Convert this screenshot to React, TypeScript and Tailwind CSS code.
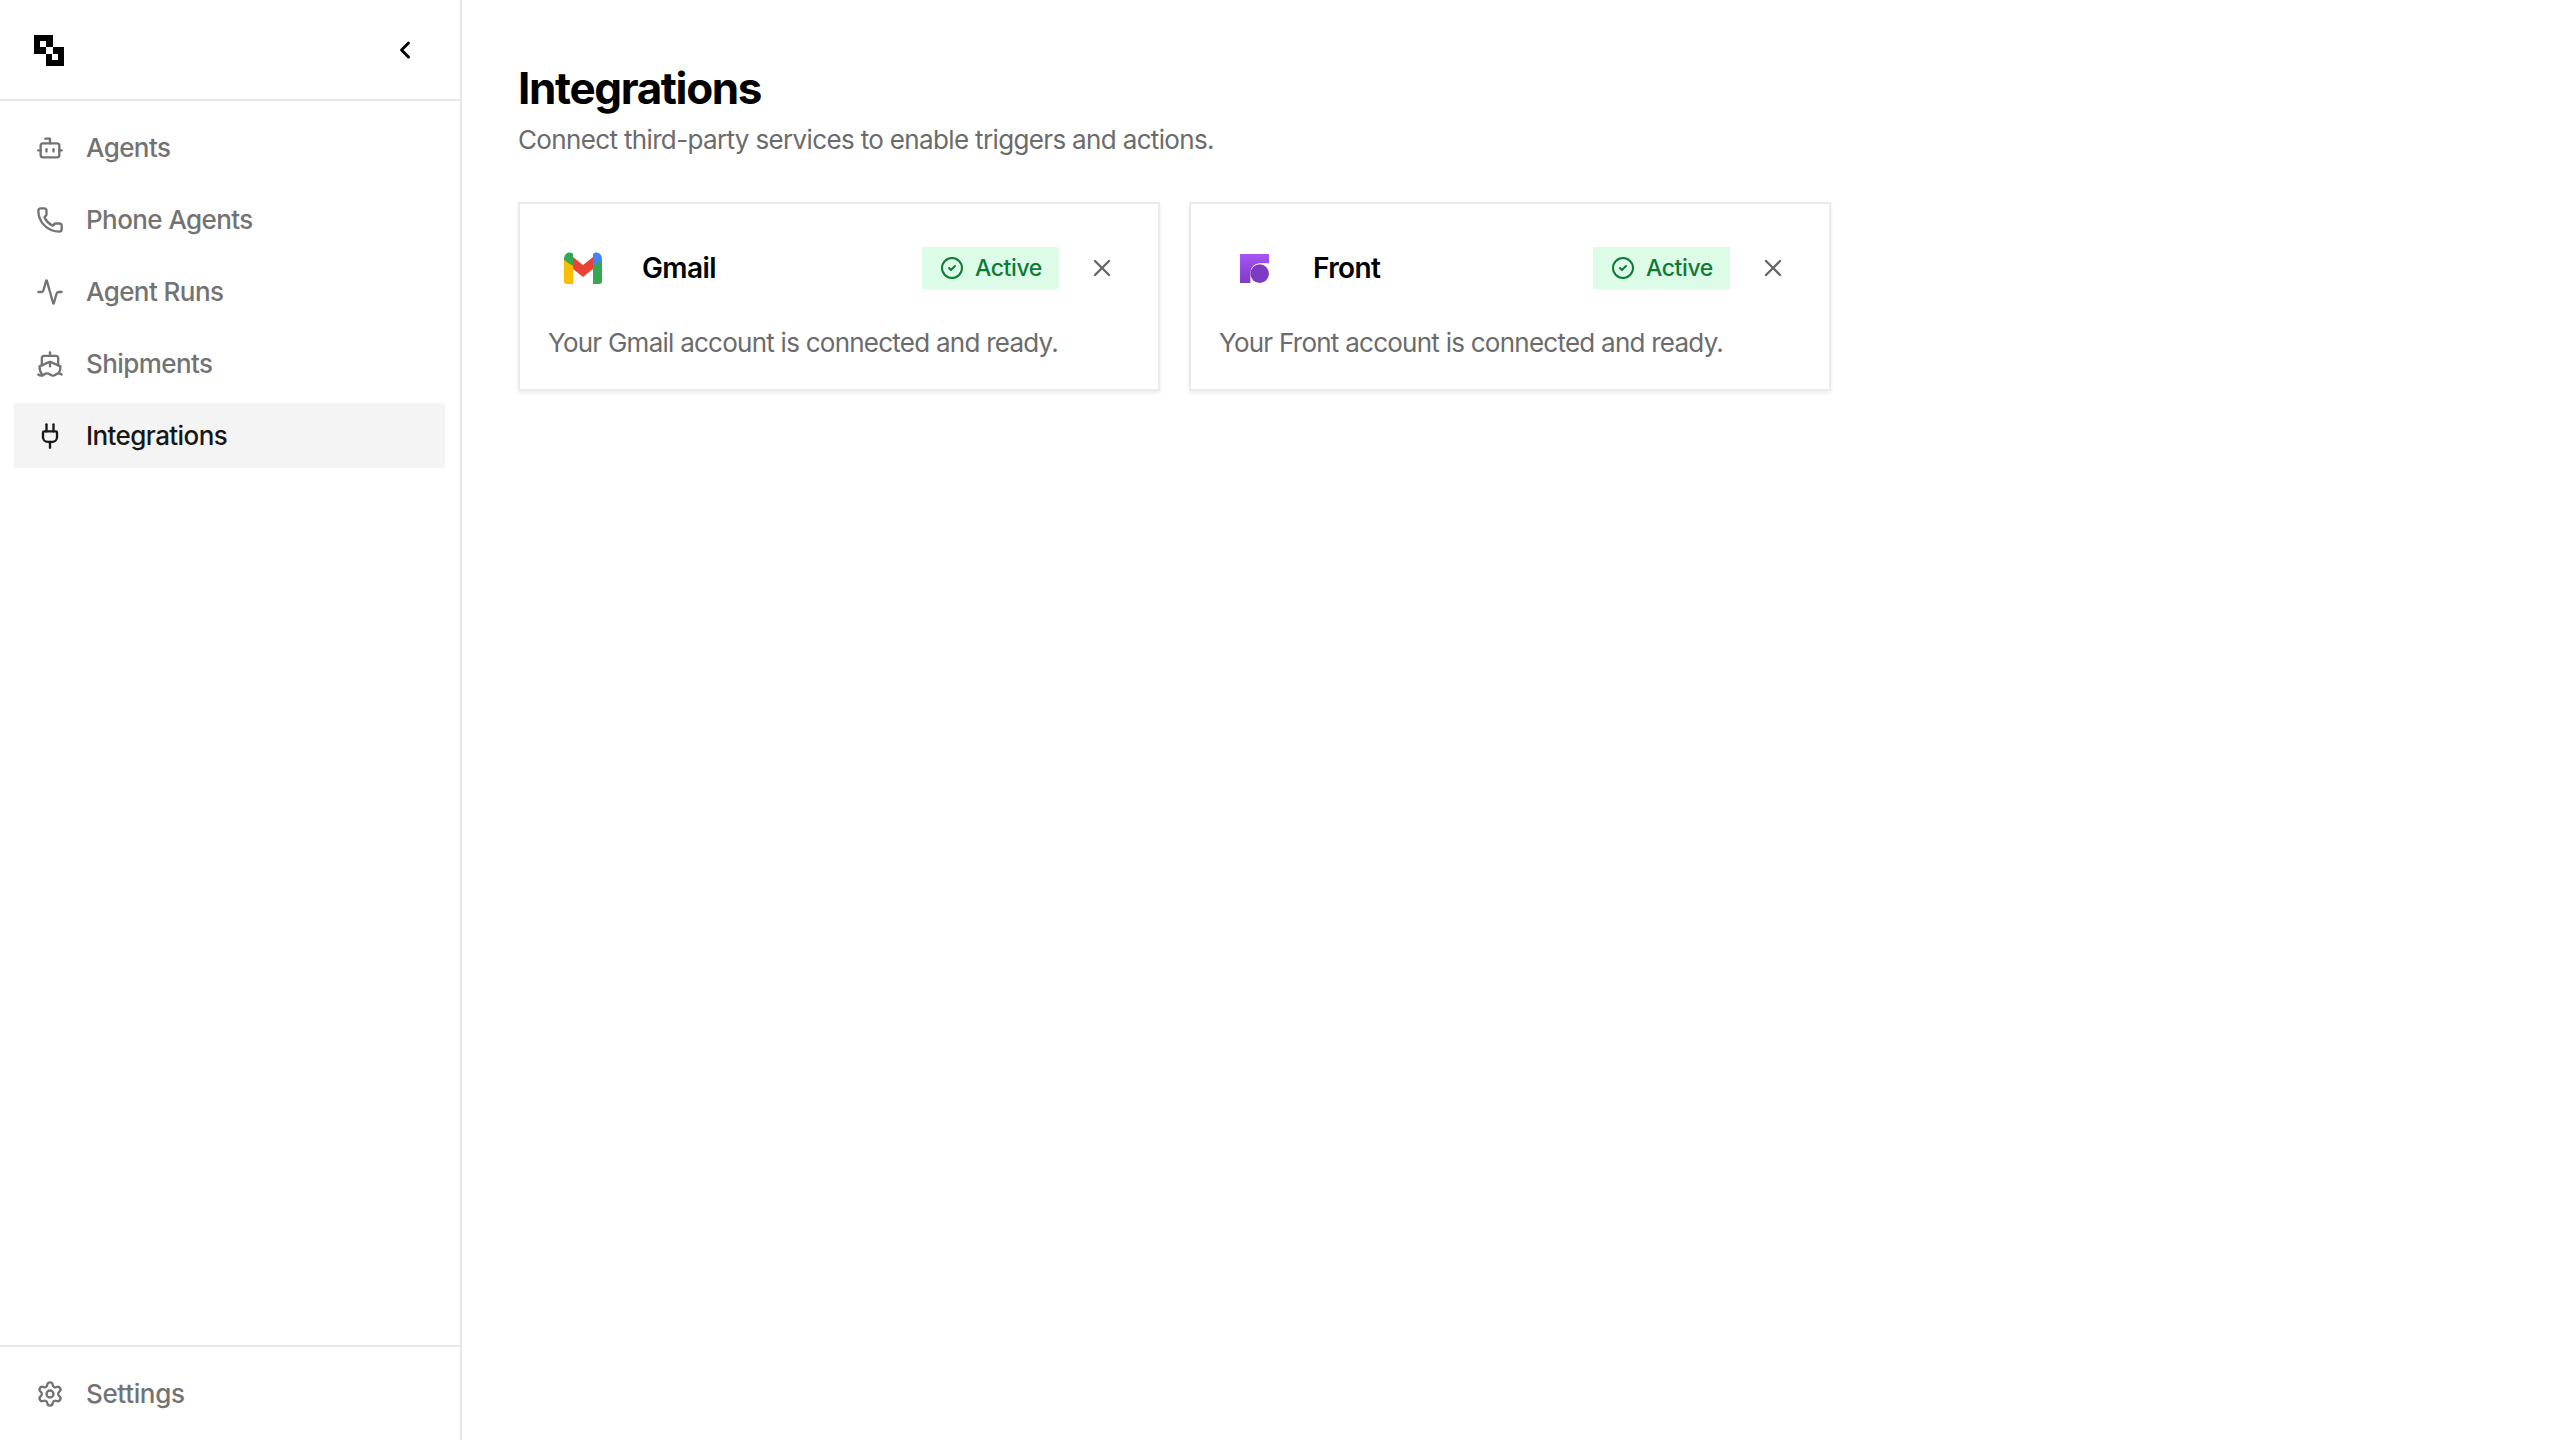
import { Bot, Phone, Activity, Ship, Plug, Settings, ChevronLeft, CircleCheck, X } from "lucide-react";

const nav = [
  { label: "Agents", Icon: Bot },
  { label: "Phone Agents", Icon: Phone },
  { label: "Agent Runs", Icon: Activity },
  { label: "Shipments", Icon: Ship },
  { label: "Integrations", Icon: Plug, active: true },
];

function Logo() {
  return (
    <svg width="32" height="32" viewBox="0 0 32 32">
      <path fillRule="evenodd" fill="#000" d="M1 1h19v12h-7v7H1zM7 7v6h6V7z" />
      <path fillRule="evenodd" fill="#000" d="M20 13h11v19H13V20h7zM19 20v6h6v-6z" />
    </svg>
  );
}

function GmailIcon() {
  return (
    <svg width="40" height="32" viewBox="0 0 40 32">
      <path fill="#FBBC04" d="M1 8h9v24H4a3 3 0 0 1-3-3z" />
      <path fill="#34A853" d="M30 8h9v21a3 3 0 0 1-3 3h-6z" />
      <path fill="#EA4335" d="M10 5l10 8 10-8v12l-10 8-10-8z" />
      <path fill="#34A853" d="M1 7c0-6 6-8 9-5v12L1 8z" />
      <path fill="#4285F4" d="M30 2c3-3 9-1 9 5v1l-9 6z" />
    </svg>
  );
}

function FrontIcon() {
  return (
    <svg width="31" height="31" viewBox="0 0 30 30">
      <defs>
        <linearGradient id="frontGrad" x1="0" y1="0" x2="0" y2="1">
          <stop offset="0" stopColor="#A855F7" />
          <stop offset="1" stopColor="#7E3AC4" />
        </linearGradient>
      </defs>
      <path fill="url(#frontGrad)" d="M1 1h28v9H20a9 9 0 0 0-9 9v10H1z" />
      <circle cx="20" cy="20" r="9" fill="#7E3AC4" />
    </svg>
  );
}

function Card({ name, logo }: { name: string; logo: React.ReactNode }) {
  return (
    <div className="w-[642px] h-[189px] border-2 border-[#ebebeb] bg-white shadow-[0_2px_4px_rgba(0,0,0,0.08)] px-[28px] pt-[43px]">
      <div className="flex items-center h-[42px]">
        <div className="w-[60px] ml-[5px] flex justify-center">{logo}</div>
        <div className="ml-[29px] text-[28px] leading-[36px] font-semibold text-black tracking-[-0.6px]">{name}</div>
        <div className="ml-auto flex items-center h-[42px] w-[137px] bg-[#dcfce7] text-[#0f7a38] pl-[18px]">
          <CircleCheck size={24} strokeWidth={2} />
          <span className="ml-[11px] text-[23px] font-medium tracking-[-0.4px]">Active</span>
        </div>
        <X size={28} strokeWidth={2} className="ml-[29px] mr-[14px] text-[#666]" />
      </div>
      <p className="mt-[36px] text-[26px] leading-[36px] text-[#6b6b6b] tracking-[-0.75px]">Your {name} account is connected and ready.</p>
    </div>
  );
}

export default function App() {
  return (
    <div className="flex h-[1440px] bg-white font-['Inter',sans-serif]">
      <aside className="w-[462px] shrink-0 border-r-2 border-[#e8e8e8] flex flex-col">
        <div className="h-[101px] shrink-0 border-b-2 border-[#e8e8e8] flex items-center justify-between pl-[33px] pr-[41px]">
          <Logo />
          <ChevronLeft size={28} strokeWidth={2.5} className="text-black" />
        </div>
        <nav className="flex-1 pt-[14px] pl-[14px] pr-[15px] flex flex-col gap-[7px]">
          {nav.map(({ label, Icon, active }) => (
            <div
              key={label}
              className={`h-[65px] flex items-center pl-[22px] ${active ? "bg-[#f4f4f4] text-[#171717]" : "text-[#737373]"}`}
            >
              <Icon size={28} strokeWidth={2} />
              <span className="ml-[22px] text-[26px] font-medium tracking-[-0.58px]">{label}</span>
            </div>
          ))}
        </nav>
        <div className="h-[95px] shrink-0 border-t-2 border-[#e8e8e8] flex items-center px-[14px]">
          <div className="flex items-center pl-[22px] text-[#737373]">
            <Settings size={28} strokeWidth={2} />
            <span className="ml-[22px] text-[26px] font-medium tracking-[-0.35px]">Settings</span>
          </div>
        </div>
      </aside>
      <main className="flex-1 pl-[56px] pt-[60px]">
        <h1 className="text-[44px] leading-[56px] font-bold text-black tracking-[-1.35px]">Integrations</h1>
        <p className="mt-[6px] text-[26px] leading-[36px] text-[#6b6b6b] tracking-[-0.65px]">Connect third-party services to enable triggers and actions.</p>
        <div className="mt-[44px] flex gap-[29px]">
          <Card name="Gmail" logo={<GmailIcon />} />
          <Card name="Front" logo={<FrontIcon />} />
        </div>
      </main>
    </div>
  );
}
